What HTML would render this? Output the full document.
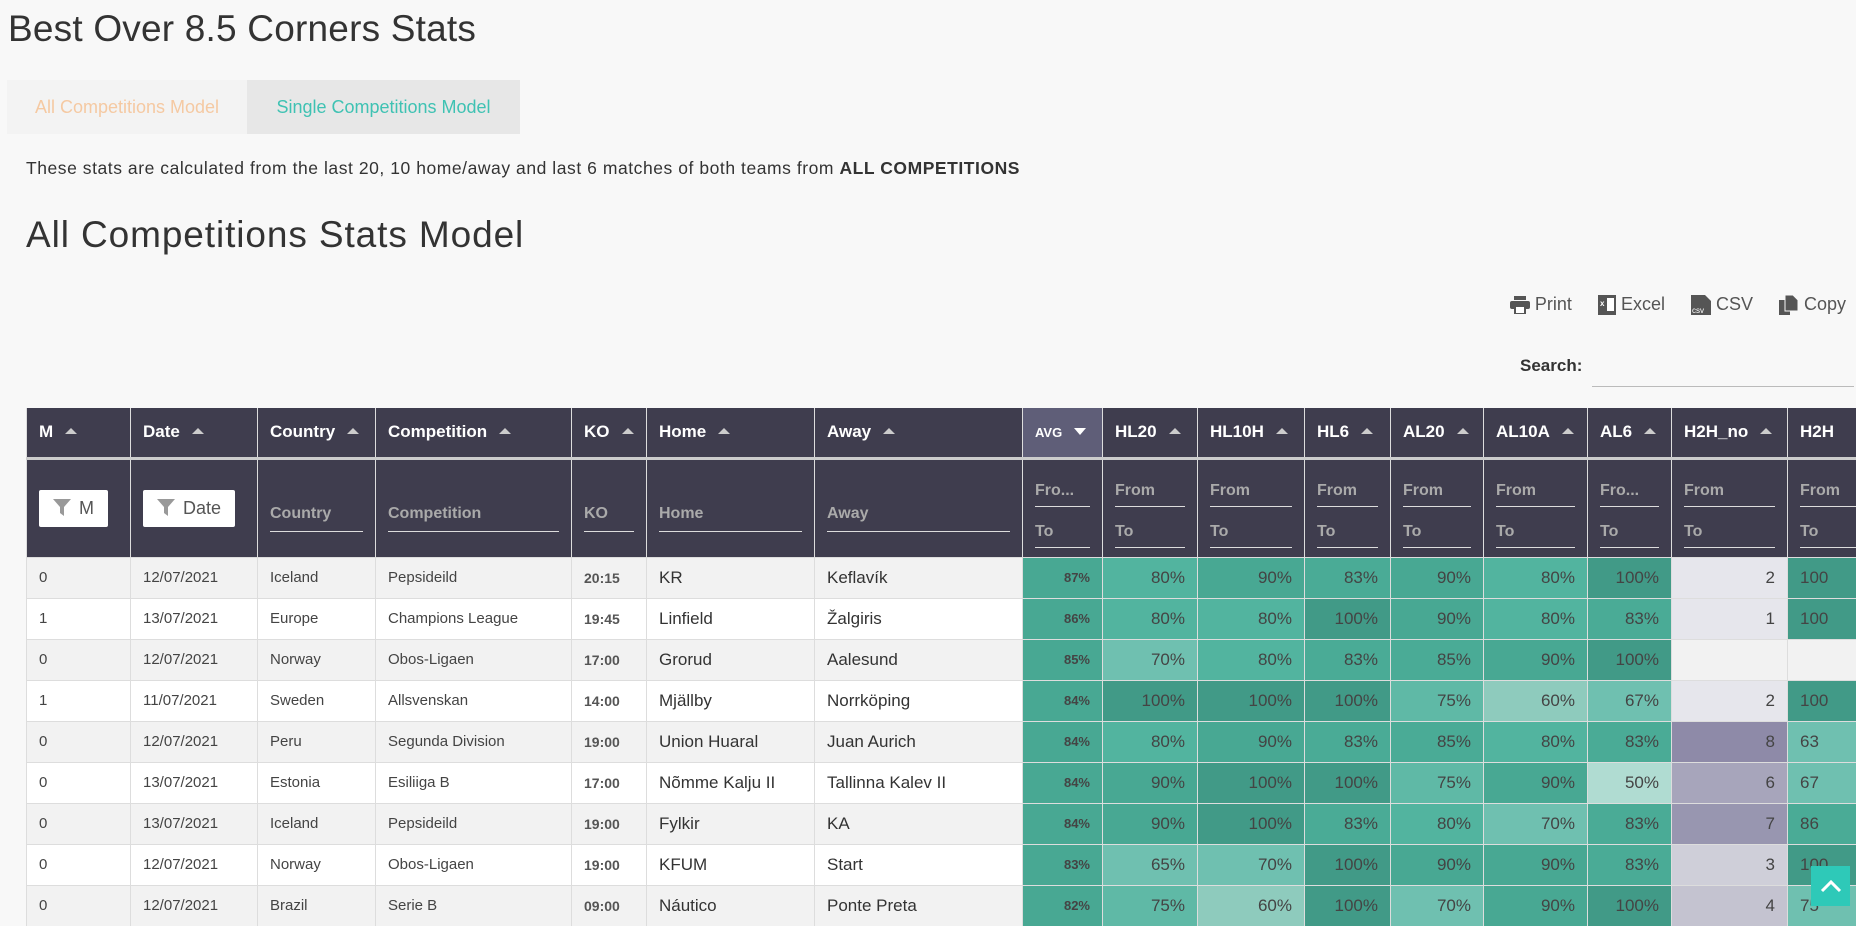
<!DOCTYPE html>
<html><head><meta charset="utf-8"><style>
html,body{margin:0;padding:0;width:1856px;height:910px;overflow:hidden;background:#f8f8f8;font-family:"Liberation Sans",sans-serif;color:#333}
h1{position:absolute;left:8px;top:8px;margin:0;font-weight:normal;font-size:37px;color:#333;letter-spacing:0.2px}
.tabs{position:absolute;left:7px;top:80px;height:54px;display:flex;font-size:18px;white-space:nowrap}
.tab{line-height:54px;box-sizing:border-box;text-align:center}
.t1{background:#f3f3f3;color:#f5c9a2;width:240px}
.t2{background:#e7e7e7;color:#3fc2b3;width:273px}
p.info{position:absolute;left:26px;top:158px;margin:0;font-size:17.5px;color:#333;letter-spacing:0.55px}
h2{position:absolute;left:26px;top:214px;margin:0;font-weight:normal;font-size:37px;color:#333;letter-spacing:0.9px}
.btns{position:absolute;right:10px;top:294px;font-size:18px;color:#555;display:flex;gap:26px}
.btns span{display:flex;align-items:center;gap:5px}
.search{position:absolute;left:1520px;top:356px;font-weight:bold;font-size:17px;color:#333}
.sline{position:absolute;left:1592px;top:386px;width:262px;height:1px;background:#bbb}
table{position:absolute;left:26px;top:408px;border-collapse:collapse;table-layout:fixed;width:1900px}
th{background:#3f3d4e;color:#fff;text-align:left;font-size:17px;font-weight:bold;height:50px;padding:0 0 0 12px;border-left:1px solid #ddd;box-sizing:border-box;white-space:nowrap;overflow:hidden}
th .a{display:inline-block;width:0;height:0;border-left:6px solid transparent;border-right:6px solid transparent;border-bottom:6px solid #ccc;margin-left:12px;vertical-align:middle;position:relative;top:-2px}
th.avg{background:#5f5e78;font-size:13px}
th.avg .a{border-bottom:none;border-top:7px solid #fff}
tr.f td{background:#3f3d4e;height:99px;border-top:3px solid #ccc;border-left:1px solid #ddd;padding:0 12px;color:#aaa;font-size:16px;font-weight:bold;vertical-align:middle;box-sizing:border-box}
.fl{border-bottom:1px solid #ddd;padding-bottom:6px;margin-top:14px;white-space:nowrap;overflow:hidden}
.ft{border-bottom:1px solid #ddd;padding-bottom:6px;margin-top:4px}
.ft2{border-bottom:1px solid #ddd;padding-bottom:8px;margin-top:20px}
.fb{background:#fff;color:#555;border-radius:2px;height:37px;display:inline-flex;align-items:center;padding:0 14px;font-weight:normal;font-size:18px;gap:8px}
tbody tr.r td{height:41px;border-left:1px solid #ddd;border-top:1px solid #ddd;font-size:15px;padding:0 12px;box-sizing:border-box;white-space:nowrap;overflow:hidden;color:#444}
tr.r:nth-child(odd) td{background:#f2f2f2}
tr.r:nth-child(even) td{background:#fff}
tr.r td.big{font-size:17px;color:#333}
tr.r td.ko{font-size:14px;font-weight:bold;color:#555}
tr.r td.n{text-align:right;font-size:17px;color:#444}
tr.r td.av{font-size:13px;font-weight:bold}
tr.r td.last{text-align:left;padding-left:12px}
.up{position:absolute;left:1811px;top:866px;width:39px;height:40px;background:#2ec9b8;display:flex;align-items:center;justify-content:center}
</style></head><body>
<h1>Best Over 8.5 Corners Stats</h1>
<div class="tabs"><div class="tab t1">All Competitions Model</div><div class="tab t2">Single Competitions Model</div></div>
<p class="info">These stats are calculated from the last 20, 10 home/away and last 6 matches of both teams from <b>ALL COMPETITIONS</b></p>
<h2>All Competitions Stats Model</h2>
<div class="btns">
<span><svg width="20" height="18" viewBox="0 0 20 18"><rect x="4" y="0" width="12" height="4" fill="#555"/><rect x="0" y="5" width="20" height="8" rx="2" fill="#555"/><rect x="5" y="10" width="10" height="8" fill="#fff" stroke="#555" stroke-width="2"/></svg>Print</span>
<span><svg width="18" height="20" viewBox="0 0 18 20"><rect x="0" y="0" width="18" height="20" fill="#555"/><text x="2" y="11" font-size="8" fill="#fff" font-family="Liberation Sans" font-weight="bold">x</text><rect x="9" y="3" width="7" height="13" fill="#fff"/></svg>Excel</span>
<span><svg width="20" height="20" viewBox="0 0 20 20"><path d="M0 0h14l6 6v14H0z" fill="#555"/><text x="1" y="18" font-size="8" fill="#fff" font-family="Liberation Sans">csv</text></svg>CSV</span>
<span><svg width="20" height="20" viewBox="0 0 20 20"><rect x="0" y="5" width="11" height="15" fill="#555"/><path d="M6 0h8l5 5v11H6z" fill="#555" stroke="#f8f8f8" stroke-width="1"/></svg>Copy</span>
</div>
<div class="search">Search:</div><div class="sline"></div>
<table>
<colgroup><col style="width:104px"><col style="width:127px"><col style="width:118px"><col style="width:196px"><col style="width:75px"><col style="width:168px"><col style="width:208px"><col style="width:80px"><col style="width:95px"><col style="width:107px"><col style="width:86px"><col style="width:93px"><col style="width:104px"><col style="width:84px"><col style="width:116px"><col style="width:139px"></colgroup>
<thead><tr><th>M<span class="a"></span></th><th>Date<span class="a"></span></th><th>Country<span class="a"></span></th><th>Competition<span class="a"></span></th><th>KO<span class="a"></span></th><th>Home<span class="a"></span></th><th>Away<span class="a"></span></th><th class="avg">AVG<span class="a"></span></th><th>HL20<span class="a"></span></th><th>HL10H<span class="a"></span></th><th>HL6<span class="a"></span></th><th>AL20<span class="a"></span></th><th>AL10A<span class="a"></span></th><th>AL6<span class="a"></span></th><th>H2H_no<span class="a"></span></th><th>H2H</th></tr>
<tr class="f">
<td><span class="fb"><svg width="18" height="18" viewBox="0 0 18 18"><path d="M0 0h18l-7 8v9l-4-3V8z" fill="#999"/></svg>M</span></td>
<td><span class="fb"><svg width="18" height="18" viewBox="0 0 18 18"><path d="M0 0h18l-7 8v9l-4-3V8z" fill="#999"/></svg>Date</span></td>
<td><div class="ft2">Country</div></td><td><div class="ft2">Competition</div></td><td><div class="ft2">KO</div></td><td><div class="ft2">Home</div></td><td><div class="ft2">Away</div></td>
<td><div class="fl">Fro...</div><div class="ft" style="margin-top:16px">To</div></td>
<td><div class="fl">From</div><div class="ft" style="margin-top:16px">To</div></td>
<td><div class="fl">From</div><div class="ft" style="margin-top:16px">To</div></td>
<td><div class="fl">From</div><div class="ft" style="margin-top:16px">To</div></td>
<td><div class="fl">From</div><div class="ft" style="margin-top:16px">To</div></td>
<td><div class="fl">From</div><div class="ft" style="margin-top:16px">To</div></td>
<td><div class="fl">Fro...</div><div class="ft" style="margin-top:16px">To</div></td>
<td><div class="fl">From</div><div class="ft" style="margin-top:16px">To</div></td>
<td><div class="fl">From</div><div class="ft" style="margin-top:16px">To</div></td>
</tr></thead>
<tbody>
<tr class="r"><td>0</td><td>12/07/2021</td><td>Iceland</td><td>Pepsideild</td><td class="ko">20:15</td><td class="big">KR</td><td class="big">Keflavík</td><td class="n av" style="background:#48a893">87%</td><td class="n" style="background:#52b49f">80%</td><td class="n" style="background:#48a893">90%</td><td class="n" style="background:#4aab96">83%</td><td class="n" style="background:#48a893">90%</td><td class="n" style="background:#52b49f">80%</td><td class="n" style="background:#419a87">100%</td><td class="n" style="background:#e6e6ec">2</td><td class="n last" style="background:#419a87">100</td></tr>
<tr class="r"><td>1</td><td>13/07/2021</td><td>Europe</td><td>Champions League</td><td class="ko">19:45</td><td class="big">Linfield</td><td class="big">Žalgiris</td><td class="n av" style="background:#48a893">86%</td><td class="n" style="background:#52b49f">80%</td><td class="n" style="background:#52b49f">80%</td><td class="n" style="background:#419a87">100%</td><td class="n" style="background:#48a893">90%</td><td class="n" style="background:#52b49f">80%</td><td class="n" style="background:#4aab96">83%</td><td class="n" style="background:#e6e6ec">1</td><td class="n last" style="background:#419a87">100</td></tr>
<tr class="r"><td>0</td><td>12/07/2021</td><td>Norway</td><td>Obos-Ligaen</td><td class="ko">17:00</td><td class="big">Grorud</td><td class="big">Aalesund</td><td class="n av" style="background:#48a893">85%</td><td class="n" style="background:#6fc0b0">70%</td><td class="n" style="background:#52b49f">80%</td><td class="n" style="background:#4aab96">83%</td><td class="n" style="background:#4aab96">85%</td><td class="n" style="background:#48a893">90%</td><td class="n" style="background:#419a87">100%</td><td class="n"></td><td class="n last"></td></tr>
<tr class="r"><td>1</td><td>11/07/2021</td><td>Sweden</td><td>Allsvenskan</td><td class="ko">14:00</td><td class="big">Mjällby</td><td class="big">Norrköping</td><td class="n av" style="background:#48a893">84%</td><td class="n" style="background:#419a87">100%</td><td class="n" style="background:#419a87">100%</td><td class="n" style="background:#419a87">100%</td><td class="n" style="background:#5fb9a6">75%</td><td class="n" style="background:#8ecbbd">60%</td><td class="n" style="background:#6fc0b0">67%</td><td class="n" style="background:#e6e6ec">2</td><td class="n last" style="background:#419a87">100</td></tr>
<tr class="r"><td>0</td><td>12/07/2021</td><td>Peru</td><td>Segunda Division</td><td class="ko">19:00</td><td class="big">Union Huaral</td><td class="big">Juan Aurich</td><td class="n av" style="background:#48a893">84%</td><td class="n" style="background:#52b49f">80%</td><td class="n" style="background:#48a893">90%</td><td class="n" style="background:#4aab96">83%</td><td class="n" style="background:#4aab96">85%</td><td class="n" style="background:#52b49f">80%</td><td class="n" style="background:#4aab96">83%</td><td class="n" style="background:#8e8aa8">8</td><td class="n last" style="background:#6fc0b0">63</td></tr>
<tr class="r"><td>0</td><td>13/07/2021</td><td>Estonia</td><td>Esiliiga B</td><td class="ko">17:00</td><td class="big">Nõmme Kalju II</td><td class="big">Tallinna Kalev II</td><td class="n av" style="background:#48a893">84%</td><td class="n" style="background:#48a893">90%</td><td class="n" style="background:#419a87">100%</td><td class="n" style="background:#419a87">100%</td><td class="n" style="background:#5fb9a6">75%</td><td class="n" style="background:#48a893">90%</td><td class="n" style="background:#b0dcd2">50%</td><td class="n" style="background:#a7a5bb">6</td><td class="n last" style="background:#6fc0b0">67</td></tr>
<tr class="r"><td>0</td><td>13/07/2021</td><td>Iceland</td><td>Pepsideild</td><td class="ko">19:00</td><td class="big">Fylkir</td><td class="big">KA</td><td class="n av" style="background:#48a893">84%</td><td class="n" style="background:#48a893">90%</td><td class="n" style="background:#419a87">100%</td><td class="n" style="background:#4aab96">83%</td><td class="n" style="background:#52b49f">80%</td><td class="n" style="background:#6fc0b0">70%</td><td class="n" style="background:#4aab96">83%</td><td class="n" style="background:#9896b0">7</td><td class="n last" style="background:#4aab96">86</td></tr>
<tr class="r"><td>0</td><td>12/07/2021</td><td>Norway</td><td>Obos-Ligaen</td><td class="ko">19:00</td><td class="big">KFUM</td><td class="big">Start</td><td class="n av" style="background:#48a893">83%</td><td class="n" style="background:#6fc0b0">65%</td><td class="n" style="background:#6fc0b0">70%</td><td class="n" style="background:#419a87">100%</td><td class="n" style="background:#48a893">90%</td><td class="n" style="background:#48a893">90%</td><td class="n" style="background:#4aab96">83%</td><td class="n" style="background:#cfcfd9">3</td><td class="n last" style="background:#419a87">100</td></tr>
<tr class="r"><td>0</td><td>12/07/2021</td><td>Brazil</td><td>Serie B</td><td class="ko">09:00</td><td class="big">Náutico</td><td class="big">Ponte Preta</td><td class="n av" style="background:#48a893">82%</td><td class="n" style="background:#5fb9a6">75%</td><td class="n" style="background:#8ecbbd">60%</td><td class="n" style="background:#419a87">100%</td><td class="n" style="background:#6fc0b0">70%</td><td class="n" style="background:#48a893">90%</td><td class="n" style="background:#419a87">100%</td><td class="n" style="background:#c4c3d0">4</td><td class="n last" style="background:#6fc0b0">75</td></tr>
</tbody></table>
<div class="up"><svg width="22" height="14" viewBox="0 0 22 14"><path d="M2 12L11 3l9 9" stroke="#fff" stroke-width="3" fill="none"/></svg></div>
</body></html>
